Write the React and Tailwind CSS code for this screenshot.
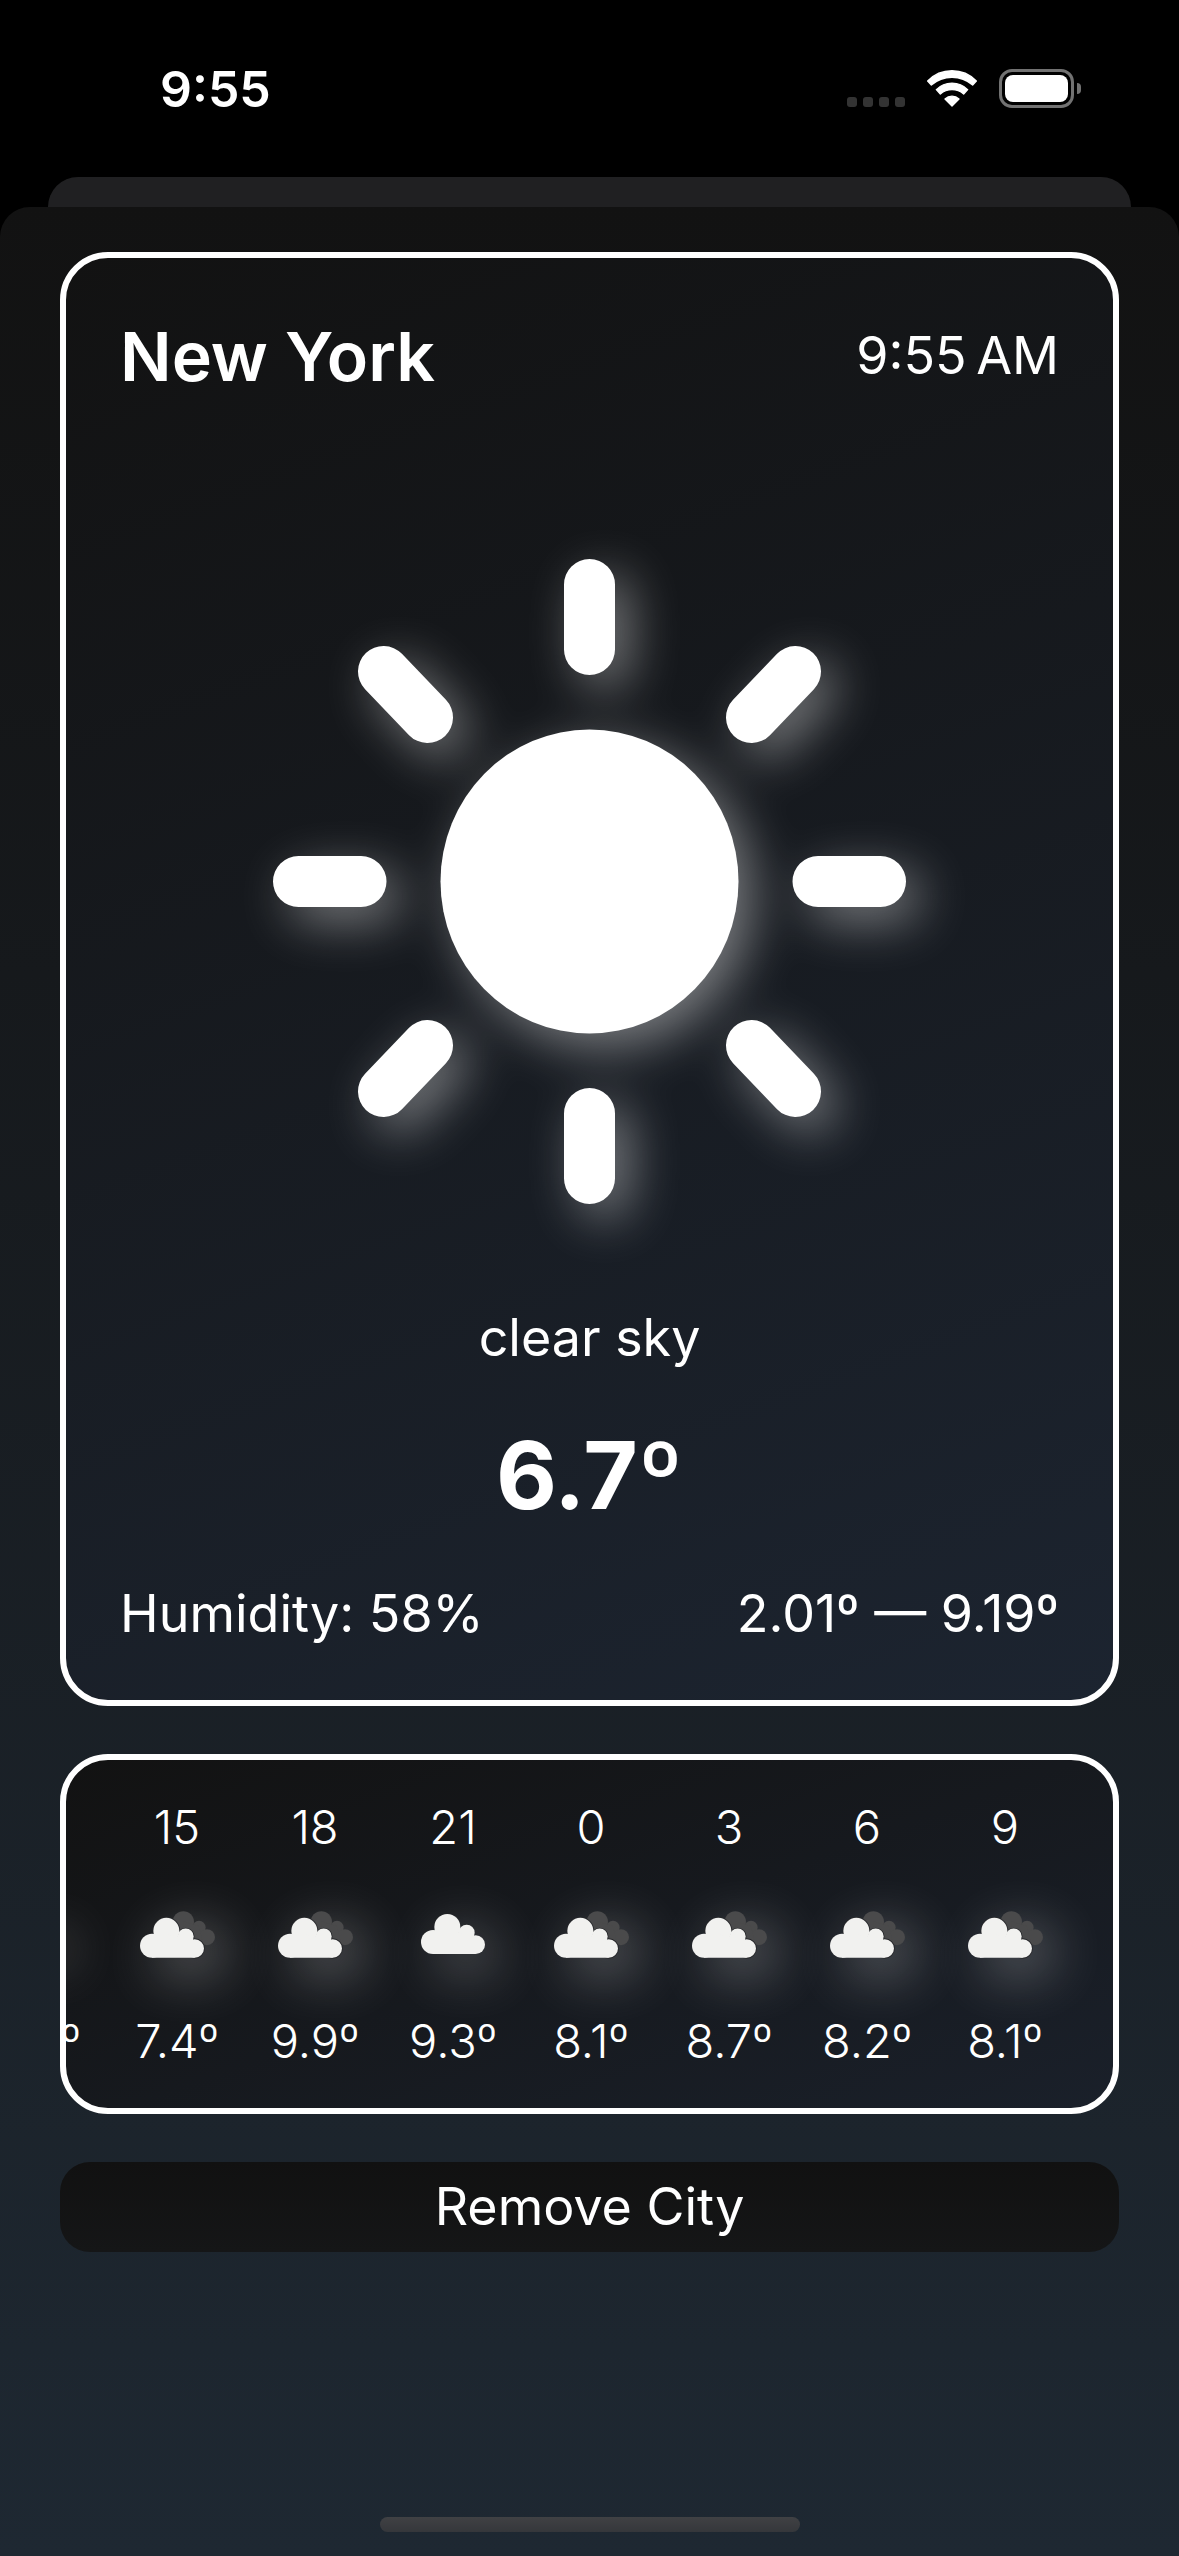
const HOURS = [
  { hour: "", icon: "sun", temp: "7.4º" },
  { hour: "15", icon: "broken", temp: "7.4º" },
  { hour: "18", icon: "broken", temp: "9.9º" },
  { hour: "21", icon: "cloud", temp: "9.3º" },
  { hour: "0", icon: "broken", temp: "8.1º" },
  { hour: "3", icon: "broken", temp: "8.7º" },
  { hour: "6", icon: "broken", temp: "8.2º" },
  { hour: "9", icon: "broken", temp: "8.1º" },
];

const GLOW = "overflow-visible drop-shadow-[15px_15px_25px_rgba(255,255,255,0.42)]";
const SOFT_GLOW = "overflow-visible drop-shadow-[14px_14px_27px_rgba(255,255,255,0.36)]";

function Sun({ className }) {
  return (
    <svg viewBox="0 0 633 645" className={`${GLOW} ${className}`} aria-hidden="true">
      <ellipse cx="316.5" cy="322.5" rx="149" ry="152" fill="#fff" />
      <path
        d="M316.5 25.5V90.5M316.5 554.5V619.5M25.5 322.5H88M545 322.5H607.5M110.5 112.5L154.5 158.5M522.5 112.5L478.5 158.5M110.5 532.5L154.5 486.5M522.5 532.5L478.5 486.5"
        stroke="#fff"
        strokeWidth="51"
        strokeLinecap="round"
      />
    </svg>
  );
}

function CloudShape() {
  return (
    <>
      <circle cx="36" cy="84" r="36" />
      <circle cx="79" cy="39" r="39" />
      <circle cx="137" cy="56" r="24" />
      <circle cx="164" cy="92" r="28" />
      <path d="M36 50H79L137 60L164 70V120H36Z" />
    </>
  );
}

function Cloud() {
  return (
    <svg viewBox="0 0 192 120" className={`${SOFT_GLOW} h-10 w-16`} aria-hidden="true">
      <g fill="#f1f1ef">
        <CloudShape />
      </g>
    </svg>
  );
}

function BrokenClouds() {
  return (
    <svg viewBox="0 -20 225 140" className={`${SOFT_GLOW} h-[47px] w-[75px]`} aria-hidden="true">
      <g fill="#4a4a4b">
        <circle cx="130" cy="12" r="32" />
        <circle cx="177" cy="29" r="20" />
        <circle cx="201" cy="58" r="24" />
        <path d="M130 10L177 25L190 82H130Z" />
      </g>
      <g fill="none" stroke="#26272a" strokeWidth="5">
        <circle cx="79" cy="39" r="39" />
        <circle cx="137" cy="56" r="24" />
        <circle cx="164" cy="92" r="28" />
      </g>
      <g fill="#f1f1ef">
        <CloudShape />
      </g>
    </svg>
  );
}

function HourIcon({ name }) {
  if (name === "sun") return <Sun className="h-12 w-12" />;
  if (name === "cloud") return <Cloud />;
  return <BrokenClouds />;
}

function StatusBar() {
  return (
    <header className="flex h-[177px] items-center justify-between pr-[98px] pl-[160px]">
      <span className="text-[50px] leading-[62px] font-semibold">9:55</span>
      <div className="flex items-center gap-[22px]">
        <div className="flex gap-1.5 pt-[26px]">
          <i className="size-2.5 rounded-[3px] bg-[#333]" />
          <i className="size-2.5 rounded-[3px] bg-[#333]" />
          <i className="size-2.5 rounded-[3px] bg-[#333]" />
          <i className="size-2.5 rounded-[3px] bg-[#333]" />
        </div>
        <svg viewBox="440 207 150 111" className="h-[37px] w-[50px]" fill="#fff" aria-hidden="true">
          <path
            stroke="#fff"
            strokeWidth="4"
            strokeLinejoin="round"
            d="M442 240A102 102 0 0 1 588 240L577 252A94 94 0 0 0 453 252ZM468 266A66 66 0 0 1 562 266L550 279A54 54 0 0 0 480 279ZM494 294A30 30 0 0 1 536 294L515 315Z"
          />
        </svg>
        <div className="flex items-center gap-[3px]">
          <div className="h-[39px] w-[75px] rounded-[13px] border-[3px] border-[#727272] p-[3px]">
            <div className="h-full rounded-[8px] bg-white" />
          </div>
          <i className="h-[11px] w-1 rounded-r-full bg-[#727272]" />
        </div>
      </div>
    </header>
  );
}

export default function App() {
  return (
    <div className="flex min-h-screen flex-col bg-black font-['Inter',sans-serif] text-white">
      <StatusBar />
      <div className="mx-12 h-[30px] rounded-t-[30px] bg-[#202022]" />
      <main className="flex grow flex-col gap-12 rounded-t-[30px] bg-linear-to-b from-[#121212] to-[#1e2832] px-[60px] pt-[45px]">
        <section className="flex flex-col rounded-[48px] border-6 border-white bg-linear-160 from-[#121212] to-[#1c2430] px-[54px] pt-14 pb-[54px]">
          <div className="flex items-center justify-between">
            <h1 className="text-[68px] leading-[84px] font-semibold">New York</h1>
            <p className="text-[52px] leading-[64px] font-normal">9:55{"\u202f"}AM</p>
          </div>
          <Sun className="mt-[161px] h-[645px] w-[633px] self-center" />
          <p className="mt-[102px] text-center text-[52px] leading-[64px] font-normal">clear sky</p>
          <p className="mt-12 text-center text-[94px] leading-[114px] font-bold">6.7º</p>
          <div className="mt-[50px] flex justify-between text-[52px] leading-[64px] font-normal">
            <p>Humidity: 58%</p>
            <p>2.01º — 9.19º</p>
          </div>
        </section>

        <section className="overflow-hidden rounded-[48px] border-6 border-white bg-linear-160 from-[#121212] to-[#1a202a]">
          <ul className="flex justify-end py-[39px] pr-[39px] text-[47px] leading-[56px] font-light">
            {HOURS.map(({ hour, icon, temp }, index) => (
              <li key={index} className="flex w-[138px] shrink-0 flex-col items-center">
                <span className="h-14">{hour}</span>
                <span className="my-[49px] flex h-[60px] items-center">
                  <HourIcon name={icon} />
                </span>
                <span>{temp}</span>
              </li>
            ))}
          </ul>
        </section>

        <button
          type="button"
          className="rounded-[30px] bg-linear-to-b from-[#111111] to-[#151617] py-[13px] text-[52px] leading-[64px] font-normal"
        >
          Remove City
        </button>

        <div className="mx-auto mt-auto mb-6 h-[15px] w-[420px] rounded-full bg-linear-to-b from-[#404144] to-[#35373b]" />
      </main>
    </div>
  );
}
